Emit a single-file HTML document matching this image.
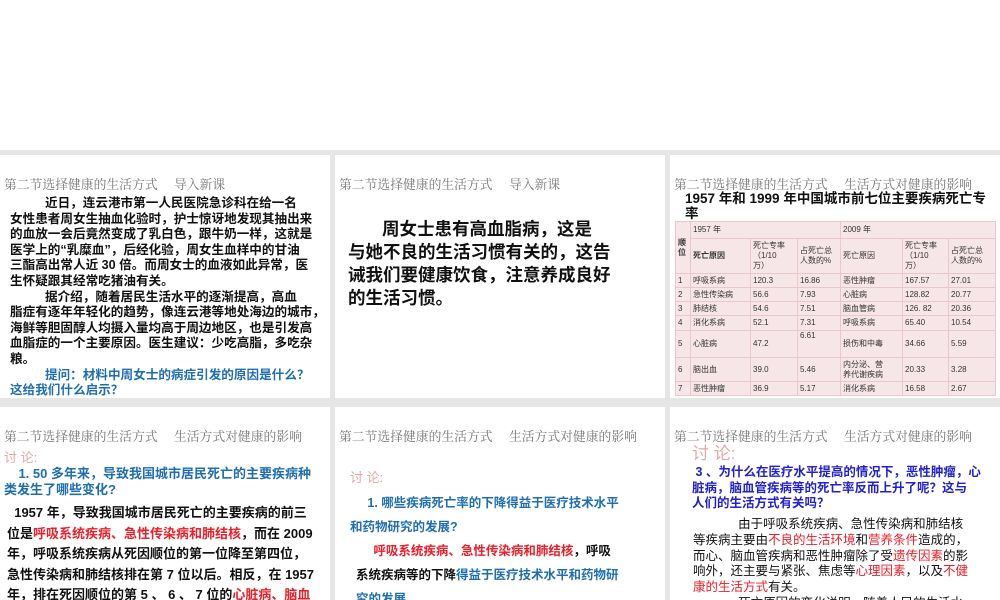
<!DOCTYPE html>
<html><head><meta charset="utf-8"><style>
*{margin:0;padding:0;box-sizing:border-box}
body{width:1000px;height:600px;overflow:hidden;background:#fff;position:relative;font-family:"Liberation Sans","Noto Sans CJK SC",sans-serif}
.bg{position:absolute;left:0;top:150px;width:1000px;height:450px;background:#e6e6e6}
.s{position:absolute;background:#fff;width:330px;overflow:hidden}
.h{position:absolute;left:4px;top:19px;font-size:12.8px;color:#777;white-space:nowrap;font-family:"Noto Serif CJK SC","Noto Sans CJK SC",serif}
.t{position:absolute;font-size:13px;font-weight:bold;color:#111;line-height:15.6px;white-space:nowrap}
.b{color:#1f6fb0}.r{color:#e8202a}.bl{color:#2222cc}
.d{color:#e0a8a8;font-weight:normal}
table{border-collapse:collapse;font-size:8px;color:#333;table-layout:fixed}
td{border:1px solid #e8c8cc;background:#f7e6e8;padding:0 2px;line-height:10px;overflow:hidden}
</style></head><body>
<div class="bg"></div>

<div class="s" style="left:0;top:155px;height:243px">
<div class="h">第二节选择健康的生活方式&nbsp;&nbsp;&nbsp;&nbsp; 导入新课</div>
<div class="t" style="left:10px;top:41px;font-size:12.6px">&nbsp;&nbsp;&nbsp;&nbsp;&nbsp;&nbsp;&nbsp;&nbsp;&nbsp;&nbsp;近日，连云港市第一人民医院急诊科在给一名<br>女性患者周女生抽血化验时，护士惊讶地发现其抽出来<br>的血放一会后竟然变成了乳白色，跟牛奶一样，这就是<br>医学上的“乳糜血”，后经化验，周女生血样中的甘油<br>三酯高出常人近 30 倍。而周女士的血液如此异常，医<br>生怀疑跟其经常吃猪油有关。<br>&nbsp;&nbsp;&nbsp;&nbsp;&nbsp;&nbsp;&nbsp;&nbsp;&nbsp;&nbsp;据介绍，随着居民生活水平的逐渐提高，高血<br>脂症有逐年年轻化的趋势，像连云港等地处海边的城市，<br>海鲜等胆固醇人均摄入量均高于周边地区，也是引发高<br>血脂症的一个主要原因。医生建议：少吃高脂，多吃杂<br>粮。<br><span class="b">&nbsp;&nbsp;&nbsp;&nbsp;&nbsp;&nbsp;&nbsp;&nbsp;&nbsp;&nbsp;提问：材料中周女士的病症引发的原因是什么？<br>这给我们什么启示？</span></div>
</div>

<div class="s" style="left:335px;top:155px;height:243px">
<div class="h">第二节选择健康的生活方式&nbsp;&nbsp;&nbsp;&nbsp; 导入新课</div>
<div class="t" style="left:13px;top:63px;font-size:17.5px;line-height:23px">&nbsp;&nbsp;&nbsp;&nbsp;&nbsp;&nbsp;&nbsp;周女士患有高血脂病，这是<br>与她不良的生活习惯有关的，这告<br>诫我们要健康饮食，注意养成良好<br>的生活习惯。</div>
</div>

<div class="s" style="left:670px;top:155px;height:243px">
<div class="h">第二节选择健康的生活方式&nbsp;&nbsp;&nbsp;&nbsp; 生活方式对健康的影响</div>
<div class="t" style="left:15px;top:36px;line-height:15px;font-size:13.5px">1957 年和 1999 年中国城市前七位主要疾病死亡专<br>率</div>
<table style="position:absolute;left:5px;top:66px;width:320px">
<colgroup><col style="width:15px"><col style="width:60px"><col style="width:47px"><col style="width:43px"><col style="width:62px"><col style="width:46px"><col style="width:47px"></colgroup>
<tr style="height:17px"><td rowspan="2" style="font-weight:bold">顺<br>位</td><td colspan="3">1957 年</td><td colspan="3">2009 年</td></tr>
<tr style="height:35px"><td style="font-weight:bold">死亡原因</td><td>死亡专率<br>（1/10<br>万）</td><td>占死亡总<br>人数的%</td><td>死亡原因</td><td>死亡专率<br>（1/10<br>万）</td><td>占死亡总<br>人数的%</td></tr>
<tr style="height:14px"><td>1</td><td>呼吸系病</td><td>120.3</td><td>16.86</td><td>恶性肿瘤</td><td>167.57</td><td>27.01</td></tr>
<tr style="height:14px"><td>2</td><td>急性传染病</td><td>56.6</td><td>7.93</td><td>心脏病</td><td>128.82</td><td>20.77</td></tr>
<tr style="height:14px"><td>3</td><td>肺结核</td><td>54.6</td><td>7.51</td><td>脑血管病</td><td>126. 82</td><td>20.36</td></tr>
<tr style="height:15px"><td>4</td><td>消化系病</td><td>52.1</td><td>7.31</td><td>呼吸系病</td><td>65.40</td><td>10.54</td></tr>
<tr style="height:27px"><td>5</td><td>心脏病</td><td>47.2</td><td style="vertical-align:top">6.61</td><td>损伤和中毒</td><td>34.66</td><td>5.59</td></tr>
<tr style="height:24px"><td>6</td><td>脑出血</td><td>39.0</td><td>5.46</td><td>内分泌、营<br>养代谢疾病</td><td>20.33</td><td>3.28</td></tr>
<tr style="height:14px"><td>7</td><td>恶性肿瘤</td><td>36.9</td><td>5.17</td><td>消化系病</td><td>16.58</td><td>2.67</td></tr>
</table>
</div>

<div class="s" style="left:0;top:407px;height:193px">
<div class="h">第二节选择健康的生活方式&nbsp;&nbsp;&nbsp;&nbsp; 生活方式对健康的影响</div>
<div class="t d" style="left:4px;top:43px">讨 论:</div>
<div class="t b" style="left:4px;top:59px">&nbsp;&nbsp;&nbsp;&nbsp;1. 50 多年来，导致我国城市居民死亡的主要疾病种<br>类发生了哪些变化?</div>
<div class="t" style="left:7px;top:96px;line-height:20.5px">&nbsp;&nbsp;1957 年，导致我国城市居民死亡的主要疾病的前三<br>位是<span class="r">呼吸系统疾病、急性传染病和肺结核</span>，而在 2009<br>年，呼吸系统疾病从死因顺位的第一位降至第四位，<br>急性传染病和肺结核排在第 7 位以后。相反，在 1957<br>年，排在死因顺位的第 5 、 6 、 7 位的<span class="r">心脏病、脑血</span></div>
</div>

<div class="s" style="left:335px;top:407px;height:193px">
<div class="h">第二节选择健康的生活方式&nbsp;&nbsp;&nbsp;&nbsp; 生活方式对健康的影响</div>
<div class="t d" style="left:15px;top:63px">讨 论:</div>
<div class="t b" style="left:15px;top:84px;line-height:24px;font-size:12.5px">&nbsp;&nbsp;&nbsp;&nbsp;&nbsp;1. 哪些疾病死亡率的下降得益于医疗技术水平<br>和药物研究的发展?</div>
<div class="t" style="left:21px;top:132px;line-height:24px;font-size:12.5px">&nbsp;&nbsp;&nbsp;&nbsp;&nbsp;<span class="r">呼吸系统疾病、急性传染病和肺结核</span>，呼吸<br>系统疾病等的下降<span class="b">得益于医疗技术水平和药物研<br>究的发展。</span></div>
</div>

<div class="s" style="left:670px;top:407px;height:193px">
<div class="h">第二节选择健康的生活方式&nbsp;&nbsp;&nbsp;&nbsp; 生活方式对健康的影响</div>
<div class="t d" style="left:22px;top:37px;font-size:17px;line-height:20px">讨 论:</div>
<div class="t bl" style="left:22px;top:58px;line-height:15.5px;font-size:12.5px">&nbsp;3 、为什么在医疗水平提高的情况下，恶性肿瘤，心<br>脏病，脑血管疾病等的死亡率反而上升了呢？这与<br>人们的生活方式有关吗？</div>
<div class="t" style="left:23px;top:110px;font-weight:normal;line-height:15.8px;font-size:12.5px">&nbsp;&nbsp;&nbsp;&nbsp;&nbsp;&nbsp;&nbsp;&nbsp;&nbsp;&nbsp;&nbsp;&nbsp;&nbsp;由于呼吸系统疾病、急性传染病和肺结核<br>等疾病主要由<span class="r">不良的生活环境</span>和<span class="r">营养条件</span>造成的，<br>而心、脑血管疾病和恶性肿瘤除了受<span class="r">遗传因素</span>的影<br>响外，还主要与紧张、焦虑等<span class="r">心理因素</span>，以及<span class="r">不健</span><br><span class="r">康的生活方式</span>有关。<br>&nbsp;&nbsp;&nbsp;&nbsp;&nbsp;&nbsp;&nbsp;&nbsp;&nbsp;&nbsp;&nbsp;&nbsp;&nbsp;死亡原因的变化说明，随着人民的生活水</div>
</div>
</body></html>
